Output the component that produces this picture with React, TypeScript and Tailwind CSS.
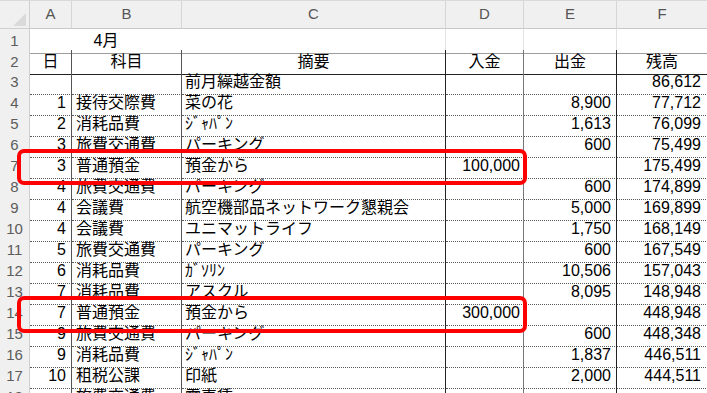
import React from "react";

type Row = {
  n: number;
  day?: string;
  item?: string;
  memo?: string;
  inAmt?: string;
  outAmt?: string;
  bal?: string;
};

const rows: Row[] = [
  { n: 3, memo: "前月繰越金額", bal: "86,612" },
  { n: 4, day: "1", item: "接待交際費", memo: "菜の花", outAmt: "8,900", bal: "77,712" },
  { n: 5, day: "2", item: "消耗品費", memo: "ｼﾞｬﾊﾟﾝ", outAmt: "1,613", bal: "76,099" },
  { n: 6, day: "3", item: "旅費交通費", memo: "パーキング", outAmt: "600", bal: "75,499" },
  { n: 7, day: "3", item: "普通預金", memo: "預金から", inAmt: "100,000", bal: "175,499" },
  { n: 8, day: "4", item: "旅費交通費", memo: "パーキング", outAmt: "600", bal: "174,899" },
  { n: 9, day: "4", item: "会議費", memo: "航空機部品ネットワーク懇親会", outAmt: "5,000", bal: "169,899" },
  { n: 10, day: "4", item: "会議費", memo: "ユニマットライフ", outAmt: "1,750", bal: "168,149" },
  { n: 11, day: "5", item: "旅費交通費", memo: "パーキング", outAmt: "600", bal: "167,549" },
  { n: 12, day: "6", item: "消耗品費", memo: "ｶﾞｿﾘﾝ", outAmt: "10,506", bal: "157,043" },
  { n: 13, day: "7", item: "消耗品費", memo: "アスクル", outAmt: "8,095", bal: "148,948" },
  { n: 14, day: "7", item: "普通預金", memo: "預金から", inAmt: "300,000", bal: "448,948" },
  { n: 15, day: "9", item: "旅費交通費", memo: "パーキング", outAmt: "600", bal: "448,348" },
  { n: 16, day: "9", item: "消耗品費", memo: "ｼﾞｬﾊﾟﾝ", outAmt: "1,837", bal: "446,511" },
  { n: 17, day: "10", item: "租税公課", memo: "印紙", outAmt: "2,000", bal: "444,511" },
  { n: 18, item: "旅費交通費", memo: "電車賃" },
];

const grid = "grid grid-cols-[30px_42px_110px_264px_78px_93px_91px]";
const cell =
  "flex items-center overflow-hidden whitespace-nowrap border-r border-b [border-bottom-style:dotted] border-b-[#5a5a5a]";

const RowHead = ({ children }: { children: React.ReactNode }) => (
  <div className="flex items-center justify-center bg-[#f0f0f0] border-r border-b border-r-[#cfcfcf] border-b-[#e2e2e2] text-[15px] text-[#5c5c5c]">
    {children}
  </div>
);

export default function App() {
  return (
    <div className="relative w-[707px] h-[393px] overflow-hidden bg-white text-black font-['Liberation_Sans','Noto_Sans_CJK_JP',sans-serif]">
      {/* column headers */}
      <div className={`${grid} h-[29px] border-t border-[#d9d9d9]`}>
        <div className="flex items-end justify-end pr-[3px] pb-[2px] bg-[#f0f0f0] border-r border-b border-[#cfcfcf]">
          <svg width="13" height="13" viewBox="0 0 13 13">
            <polygon points="13,0 13,13 0,13" fill="#dadada" />
          </svg>
        </div>
        {["A", "B", "C", "D", "E", "F"].map((c) => (
          <div
            key={c}
            className="flex items-center justify-center bg-[#f0f0f0] border-r border-b border-r-[#d6d6d6] border-b-[#c8c8c8] text-[15px] text-[#555]"
          >
            {c}
          </div>
        ))}
      </div>

      {/* row 1 */}
      <div className={`${grid} h-[21px]`}>
        <RowHead>1</RowHead>
        <div className="col-span-2 flex items-center justify-center border-b border-b-[#9c9c9c] text-[16px]">
          4月
        </div>
        <div className="border-r border-b border-r-[#e3e3e3] border-b-[#9c9c9c]" />
        <div className="border-r border-b border-r-[#e3e3e3] border-b-[#9c9c9c]" />
        <div className="border-r border-b border-r-[#e3e3e3] border-b-[#9c9c9c]" />
        <div className="border-b border-b-[#9c9c9c]" />
      </div>

      {/* row 2 */}
      <div className={`${grid} h-[21px] text-[16px]`}>
        <RowHead>2</RowHead>
        <div className="flex items-center justify-center border-r border-b border-r-[#555] border-b-[#222]">日</div>
        <div className="flex items-center justify-center border-r border-b border-r-[#555] border-b-[#222]">科目</div>
        <div className="flex items-center justify-center border-r border-b border-r-[#222] border-b-[#222]">摘要</div>
        <div className="flex items-center justify-center border-r border-b border-r-[#777] border-b-[#222]">入金</div>
        <div className="flex items-center justify-center border-r border-b border-r-[#222] border-b-[#222]">出金</div>
        <div className="flex items-center justify-center border-r border-b border-r-[#222] border-b-[#222]">残高</div>
      </div>

      {/* data rows */}
      {rows.map((r) => (
        <div key={r.n} className={`${grid} h-[21px] text-[16px]`}>
          <RowHead>{r.n}</RowHead>
          <div className={`${cell} justify-end pr-[5px] border-r-[#555]`}>{r.day}</div>
          <div className={`${cell} pl-[4px] border-r-[#555]`}>{r.item}</div>
          <div className={`${cell} pl-[3px] border-r-[#222]`}>{r.memo}</div>
          <div className={`${cell} justify-end pr-[3px] border-r-[#777]`}>{r.inAmt}</div>
          <div className={`${cell} justify-end pr-[5px] border-r-[#222]`}>{r.outAmt}</div>
          <div className={`${cell} justify-end pr-[6px] border-r-[#222]`}>{r.bal}</div>
        </div>
      ))}

      {/* red highlight boxes */}
      <div className="absolute left-[17px] top-[149px] w-[510px] h-[36px] rounded-[7px] border-4 border-[#ff0000]" />
      <div className="absolute left-[17px] top-[296px] w-[510px] h-[37px] rounded-[7px] border-4 border-[#ff0000]" />
    </div>
  );
}
